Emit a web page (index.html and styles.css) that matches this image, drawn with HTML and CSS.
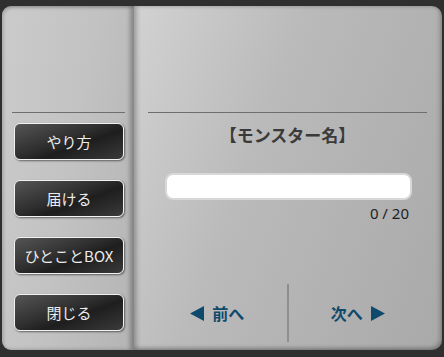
FILE: index.html
```html
<!DOCTYPE html>
<html lang="ja">

<head>
    <meta charset="UTF-8">
    <meta name="viewport" content="width=device-width, initial-scale=1.0">
    <title>モンスター名</title>
    <link rel="stylesheet" href="styles.css">
</head>

<body>
    <div class="frame">
        <div class="side">
            <hr class="rule">
            <div class="menu">
                <button class="menu-btn">やり方</button>
                <button class="menu-btn">届ける</button>
                <button class="menu-btn">ひとことBOX</button>
                <button class="menu-btn">閉じる</button>
            </div>
        </div>
        <div class="main">
            <hr class="rule">
            <h2 class="title">【モンスター名】</h2>
            <div class="field">
                <input type="text" class="name-input" maxlength="20">
                <div class="counter">0 / 20</div>
            </div>
            <div class="nav">
                <button class="nav-btn">
                    <svg class="arrow" width="14" height="15" viewBox="0 0 14 15"><path d="M0 7.5L14 0V15Z" fill="currentColor"/></svg>
                    前へ
                </button>
                <div class="nav-divider"></div>
                <button class="nav-btn">
                    次へ
                    <svg class="arrow" width="14" height="15" viewBox="0 0 14 15"><path d="M14 7.5L0 0V15Z" fill="currentColor"/></svg>
                </button>
            </div>
        </div>
    </div>
</body>

</html>
```

FILE: styles.css
```css
body {
    margin: 0;
    background-color: #2f2f2f;
    font-family: "Noto Sans", "Noto Sans CJK JP", sans-serif;
}

.frame {
    display: flex;
    width: 444px;
    height: 357px;
    box-sizing: border-box;
    padding: 6px 2px 7px 2px;
}

.side {
    width: 132px;
    border-radius: 9px 0 0 9px;
    background: linear-gradient(100deg, #cbcbcb 0%, #c2c2c2 50%, #b4b4b4 100%);
    box-shadow: inset -4px 0 4px rgba(0, 0, 0, 0.28), inset 2px 2px 3px rgba(0, 0, 0, 0.15);
    padding-top: 106px;
    box-sizing: border-box;
}

.main {
    flex: 1;
    border-radius: 0 10px 10px 0;
    background: linear-gradient(110deg, #d2d2d2 0%, #bababa 40%, #a9a9a9 100%);
    box-shadow: inset 3px 0 4px rgba(0, 0, 0, 0.22), inset -2px -2px 4px rgba(0, 0, 0, 0.25);
    padding: 106px 15px 0 14px;
    box-sizing: border-box;
    display: flex;
    flex-direction: column;
}

.rule {
    margin: 0;
    border: none;
    border-top: 1px solid #6e6e6e;
    height: 0;
}

.side .rule {
    margin: 0 9px 0 10px;
}

.menu {
    display: flex;
    flex-direction: column;
    gap: 20px;
    padding: 10px 10px 0 12px;
}

.menu-btn {
    height: 37px;
    border: 1px solid #f2f2f2;
    border-radius: 6px;
    background: linear-gradient(160deg, #555 0%, #2e2e2e 45%, #1e1e1e 60%, #3a3a3a 100%);
    box-shadow: 1px 1px 2px rgba(0, 0, 0, 0.5);
    color: #ececec;
    font-family: "Noto Sans CJK JP", sans-serif;
    font-size: 15px;
    cursor: pointer;
    padding: 0;
}

.title {
    margin: 9px 0 0 0;
    text-align: center;
    font-family: "Noto Sans CJK JP", sans-serif;
    font-size: 17px;
    font-weight: bold;
    line-height: 26px;
    color: #3a3a3a;
}

.field {
    margin: 25px 15px 0 17px;
}

.name-input {
    display: block;
    width: 100%;
    height: 27px;
    box-sizing: border-box;
    border: 2px solid #d8d8d8;
    border-radius: 8px;
    background-color: #fff;
    outline: none;
}

.counter {
    text-align: right;
    padding-right: 3px;
    margin-top: 3px;
    font-size: 15px;
    line-height: 20px;
    color: #1e1e1e;
}

.nav {
    display: flex;
    align-items: center;
    margin-top: 61px;
    height: 58px;
}

.nav-btn {
    flex: 1;
    display: flex;
    justify-content: center;
    align-items: center;
    gap: 8px;
    background: none;
    border: none;
    color: #0f4a6c;
    font-family: "Noto Sans CJK JP", sans-serif;
    font-size: 16px;
    font-weight: bold;
    cursor: pointer;
    padding: 0;
}

.arrow {
    display: block;
}

.nav-divider {
    width: 2px;
    height: 100%;
    background-color: #8e8e8e;
}
```
